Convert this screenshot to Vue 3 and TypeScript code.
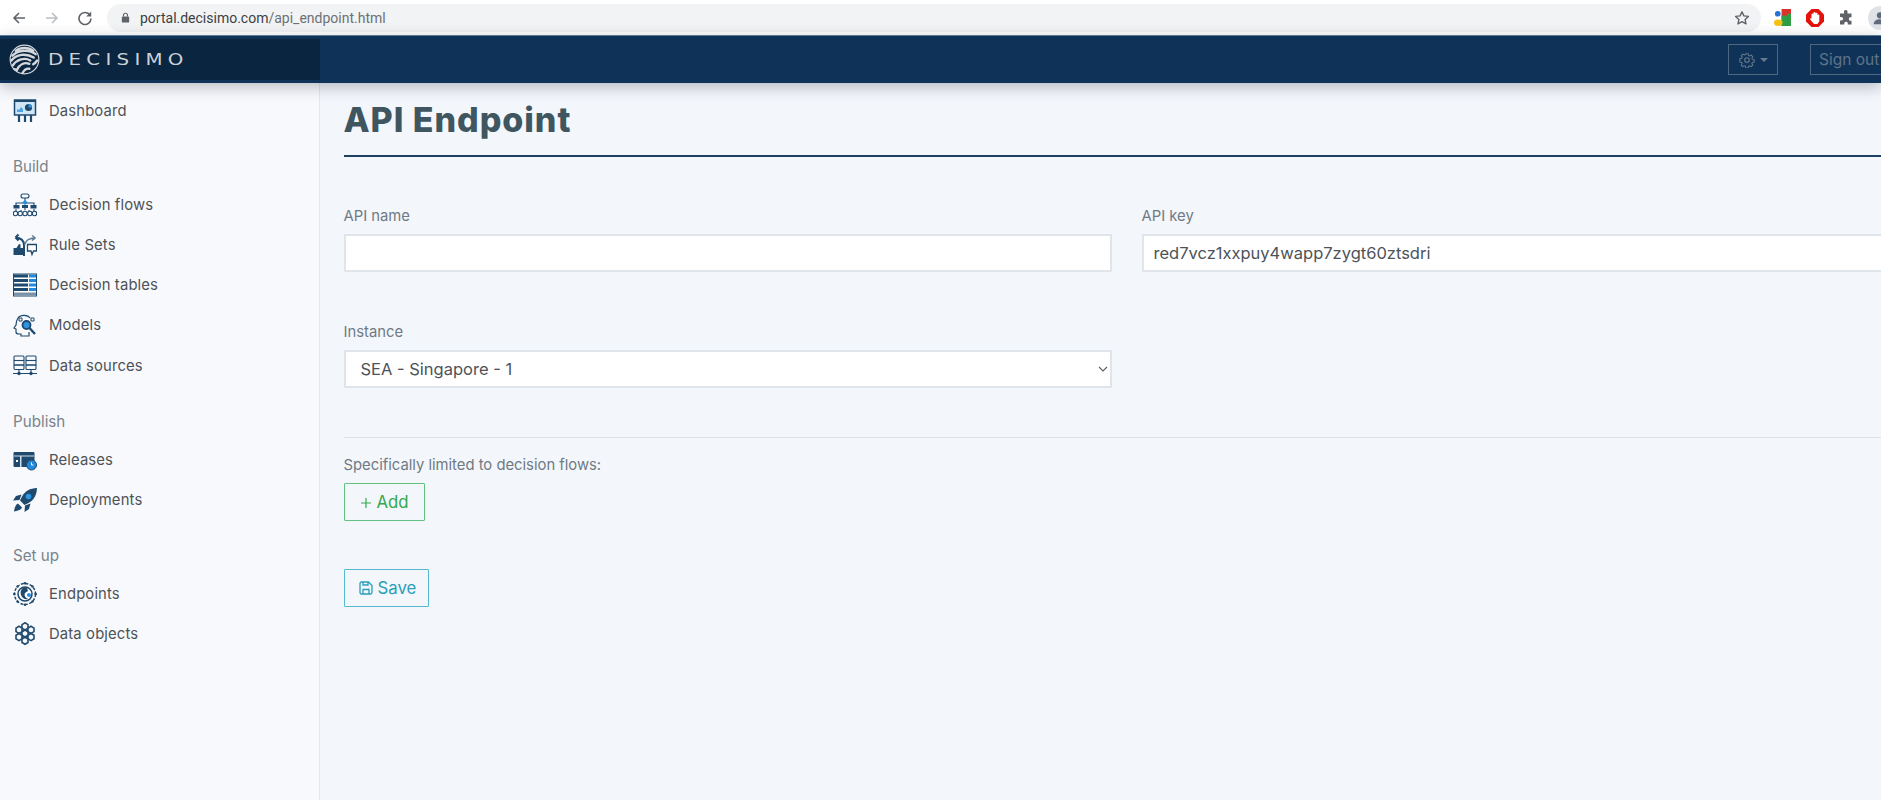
<script setup lang="ts">
const apiKey: string = 'red7vcz1xxpuy4wapp7zygt60ztsdri'
</script>

<template>
  <div class="page">
    <div class="chrome">
      <svg class="c-ico" viewBox="0 0 16 16"><path d="M14 8H3M8 3 3 8l5 5" fill="none" stroke="#5f6368" stroke-width="1.6"/></svg>
      <svg class="c-ico" viewBox="0 0 16 16"><path d="M2 8h11M8 3l5 5-5 5" fill="none" stroke="#bcc0c4" stroke-width="1.6"/></svg>
      <svg class="c-ico" viewBox="0 0 16 16"><path d="M13 5.2A6 6 0 1 0 14 8.6" fill="none" stroke="#5f6368" stroke-width="1.6"/><path d="M14.2 1.6v5h-5z" fill="#5f6368"/></svg>
      <div class="url">
        <svg class="lock" viewBox="0 0 12 12"><rect x="2" y="5" width="8" height="6.5" rx="1" fill="#5f6368"/><path d="M3.8 5V3.6a2.2 2.2 0 0 1 4.4 0V5" fill="none" stroke="#5f6368" stroke-width="1.2"/></svg>
        <span class="host">portal.decisimo.com</span><span class="path">/api_endpoint.html</span>
        <svg class="star" viewBox="0 0 16 16"><path d="m8 1.8 1.9 4.1 4.5.5-3.3 3 .9 4.5L8 11.7l-4 2.2.9-4.5-3.3-3 4.5-.5z" fill="none" stroke="#5f6368" stroke-width="1.4" stroke-linejoin="round"/></svg>
      </div>
      <svg class="ext ext-g" viewBox="0 0 18 18">
        <rect x="7" y="0" width="11" height="18" fill="#d8342c"/>
        <rect x="0" y="0" width="8" height="18" fill="#fff"/>
        <rect x="8" y="7" width="6" height="11" fill="#2f9e44"/>
        <rect x="14" y="5" width="4" height="13" fill="#2f9e44"/>
        <circle cx="4" cy="5" r="3" fill="#2a6fd6"/>
        <ellipse cx="4.5" cy="14.5" rx="4.5" ry="3.5" fill="#f5c211"/>
      </svg>
      <svg class="ext ext-r" viewBox="0 0 18 18">
        <path d="M5.5 0h7L18 5.5v7L12.5 18h-7L0 12.500v-7z" fill="#e3120b"/>
        <path d="M5.500 9V5.500a1 1 0 0 1 2 0V4a1 1 0 0 1 2 0v.8a1 1 0 0 1 2 0V6a1 1 0 0 1 1.800 0v6.200L11.500 15H8L4.200 10.500c-.5-.9.6-1.700 1.300-1.100z" fill="#fff"/>
      </svg>
      <svg class="ext ext-p" viewBox="0 0 16 16"><path d="M6 1.500a1.800 1.800 0 0 1 3.500 0V3.500h4v3.700h-1.300a1.800 1.800 0 0 0 0 3.500h1.300v3.800H9.800v-1.300a1.800 1.800 0 0 0-3.500 0v1.300H2v-4h1.300a1.800 1.800 0 0 0 0-3.600H2V3.500h4z" fill="#5f6368"/></svg>
      <div class="avatar">
        <svg viewBox="0 0 20 20"><circle cx="10" cy="7" r="3.500" fill="#5f6b7a"/><path d="M3 17c0-4 3.500-5.500 7-5.500s7 1.500 7 5.500z" fill="#5f6b7a"/></svg>
      </div>
    </div>

    <header class="topbar">
      <div class="brand">
        <svg class="globe" viewBox="0 0 32 32" fill="none" stroke="#d5d9dd" stroke-linecap="round">
          <circle cx="16" cy="16" r="14.800" stroke-width="1.200"/>
          <path d="M7 7c5-4 13-4 18 0M3.500 12c6-6 17-7 24-1.500M2.500 17c5-6.500 15-8 23-3M4 22c4-6 12-8.500 18-5M8 27c3-6 8-8.500 13-6.500M25 21c1.500-1 3-2.500 4-4M14 30c1.500-3 4-5 7-4.500" stroke-width="2.500"/>
          <circle cx="6" cy="26" r="1.300" fill="#d5d9dd" stroke="none"/>
        </svg>
        <span class="wordmark">DECISIMO</span>
      </div>
      <div class="top-actions">
        <button class="top-btn gear" type="button">
          <svg viewBox="0 0 16 16" class="gear-ico" fill="none" stroke="#68798a" stroke-width="1.100"><circle cx="8" cy="8" r="2.300"/><path d="M6.800 1.200h2.400l.4 1.900 1.300.6 1.700-1 1.600 1.700-1 1.600.6 1.300 1.900.4v2.400l-1.900.4-.6 1.300 1 1.700-1.700 1.600-1.600-1-1.300.6-.4 1.900H6.800l-.4-1.900-1.300-.6-1.700 1-1.600-1.700 1-1.600-.6-1.300-1.900-.4V6.600l1.900-.4.600-1.300-1-1.700 1.700-1.600 1.600 1 1.300-.6z" transform="translate(.6 .6) scale(.93)"/></svg>
          <span class="caret"></span>
        </button>
        <button class="top-btn signout" type="button">Sign out</button>
      </div>
    </header>

    <div class="body">
      <aside class="sidebar">
        <nav class="nav">
          <a class="item">
            <svg class="ico" viewBox="0 0 24 24"><rect x="1.500" y="1" width="21" height="15" fill="#cfe6f7" stroke="#1f4a6e" stroke-width="1.500"/><rect x="1" y="1" width="22" height="2" fill="#1f4a6e"/><path d="M4 13v-3l2 1 2-3 2 2v3z" fill="#49a5e6"/><circle cx="15.500" cy="8.500" r="3.600" fill="#1f4a6e"/><path d="M15.500 8.500V4.900a3.600 3.600 0 0 1 3.600 3.600z" fill="#2f94e0"/><path d="M6 16v7M12 16v7M18 16v7" stroke="#1f4a6e" stroke-width="2.200"/></svg>
            Dashboard
          </a>

          <div class="group">Build</div>
          <a class="item">
            <svg class="ico" viewBox="0 0 24 24" fill="none" stroke="#1f4a6e" stroke-width="1.100"><rect x="8" y="1" width="8" height="4" rx="2"/><path d="M12 5v4M3 12V10h18v2M12 14v3M3 16v2M21 16v2M8 17v1M16 17v1"/><path d="m12 7 3 2.500-3 2.500-3-2.500z" fill="#2a8fdc" stroke="none"/><rect x="0.500" y="12" width="6" height="3.500" fill="#1f4a6e" stroke="none"/><rect x="17.500" y="12" width="6" height="3.500" fill="#1f4a6e" stroke="none"/><rect x="9" y="12" width="6" height="3" fill="#1f4a6e" stroke="none"/><circle cx="2.500" cy="20.500" r="2.200"/><circle cx="7.200" cy="20.500" r="2.200"/><circle cx="12" cy="20.500" r="2.200"/><circle cx="16.800" cy="20.500" r="2.200"/><circle cx="21.500" cy="20.500" r="2.200"/></svg>
            Decision flows
          </a>
          <a class="item">
            <svg class="ico" viewBox="0 0 24 24" fill="none" stroke="#1f4a6e" stroke-width="2"><path d="M11 23V12C11 7 8 5 2.500 4.500M2.500 4.500l3-3M2.500 4.500l3 3"/><path d="M11.500 12c1-5 5-7 11-7M22.500 5 19 2.500M22.500 5 19 7.500" stroke="#5a7a94" stroke-width="1.300"/><path d="M0.500 15h3l2.500-4 1.500.5V15h2.500v7H0.500z" fill="#1f4a6e" stroke="none"/><path d="M14.500 11.500h9v6.500h-3l-1.500 3.500-1-3.500h-3.500z" fill="#fff" stroke-width="1.300"/></svg>
            Rule Sets
          </a>
          <a class="item">
            <svg class="ico" viewBox="0 0 24 24"><rect x="0.500" y="1" width="23" height="22" fill="#fff" stroke="#1f4a6e"/><g fill="#1f4a6e"><rect x="1" y="1.500" width="14" height="3"/><rect x="1" y="6" width="14" height="3"/><rect x="1" y="10.500" width="14" height="3"/><rect x="1" y="15" width="14" height="3"/></g><g fill="#1f8ae0"><rect x="16" y="1.500" width="7" height="3"/><rect x="16" y="6" width="7" height="3"/><rect x="16" y="10.500" width="7" height="3"/><rect x="16" y="15" width="7" height="3"/></g><rect x="1" y="19.500" width="22" height="3" fill="#7a92a8"/></svg>
            Decision tables
          </a>
          <a class="item">
            <svg class="ico" viewBox="0 0 24 24" fill="none" stroke="#1f4a6e" stroke-width="1.200"><path d="M17 5c-2-3-9-4-12 0-2 3-2 5-2 7l-2 3 2 1v3c0 1 1 2 3 2h2v2h8v-4"/><circle cx="13.500" cy="12" r="4" fill="#2f94e0" stroke-width="1.800"/><path d="m16.500 15 5.500 6" stroke-width="2.400"/><path d="M6 5h3v3H6zM18 5h3v3h-3z" stroke-width="1"/></svg>
            Models
          </a>
          <a class="item">
            <svg class="ico" viewBox="0 0 24 24" fill="none" stroke="#1f4a6e" stroke-width="1.100"><rect x="1" y="2" width="10" height="4.500" rx="1"/><rect x="1" y="6.500" width="10" height="4.500"/><rect x="1" y="11" width="10" height="4.500" rx="1"/><rect x="13" y="2" width="10" height="4.500" rx="1"/><rect x="13" y="6.500" width="10" height="4.500"/><rect x="13" y="11" width="10" height="4.500" rx="1"/><path d="M6 15.500V19M18 15.500V19M0 19.500h24" /><circle cx="6" cy="19.500" r="1.200" fill="#1f4a6e"/><circle cx="18" cy="19.500" r="1.200" fill="#1f4a6e"/></svg>
            Data sources
          </a>

          <div class="group">Publish</div>
          <a class="item">
            <svg class="ico" viewBox="0 0 24 24"><rect x="0.500" y="4" width="21" height="15" rx="1" fill="#1f4a6e"/><path d="M1 8h20" stroke="#cfe0ee" stroke-width="1"/><rect x="7" y="8" width="1.500" height="11" fill="#cfe0ee"/><rect x="3" y="12" width="2" height="2" fill="#fff"/><circle cx="18.500" cy="17" r="5" fill="#2188dc" stroke="#1f4a6e" stroke-width="1"/><path d="M18.500 14.500V17h2" stroke="#fff" fill="none"/></svg>
            Releases
          </a>
          <a class="item">
            <svg class="ico" viewBox="0 0 24 24"><path d="M24 0c-7 .3-12 3-15 8.500l-2 4 4.500 4.500 4-2c5.500-3 8.200-8 8.500-15z" fill="#1f4a6e"/><circle cx="15.500" cy="8.500" r="2.800" fill="#2a96e6"/><path d="M8.500 6.500 3 8 0 12.500l6.500-.5zM17.500 15.500 16 21l-4.500 3 .5-6.500z" fill="#1f4a6e"/><path d="M5 15.500c-2.500 1-3.500 4.500-4 8 3.500-.5 7-1.500 8-4z" fill="#1f4a6e"/></svg>
            Deployments
          </a>

          <div class="group">Set up</div>
          <a class="item">
            <svg class="ico" viewBox="0 0 24 24" fill="none" stroke="#1f4a6e"><circle cx="12" cy="12" r="10.500" stroke-width="1.400" stroke-dasharray="3 1.500"/><circle cx="12" cy="12" r="7" fill="#fff" stroke-width="1.500"/><path d="M12 5c-4 1-5 5-4 8s4 5 7 4c-3-2-4-3-3-6l3-2-1-3z" fill="#1f4a6e" stroke="none"/><circle cx="16" cy="13" r="2" fill="#2a8fdc" stroke="none"/><g fill="#1f4a6e" stroke="none"><circle cx="12" cy="1.300" r="1.300"/><circle cx="12" cy="22.700" r="1.300"/><circle cx="1.300" cy="12" r="1.300"/><circle cx="22.700" cy="12" r="1.300"/><circle cx="4.500" cy="4.500" r="1.200"/><circle cx="19.500" cy="4.500" r="1.200"/><circle cx="4.500" cy="19.500" r="1.200"/><circle cx="19.500" cy="19.500" r="1.200"/></g></svg>
            Endpoints
          </a>
          <a class="item">
            <svg class="ico" viewBox="0 0 24 24" fill="none" stroke="#1f4a6e" stroke-width="1.600"><path d="m12 .8 3 1.800v3.500l-3 1.800-3-1.800V2.600zM6 4.300l3 1.800v3.500l-3 1.800-3-1.800V6.100zM18 4.300l3 1.800v3.500l-3 1.800-3-1.800V6.100zM12 8l3 1.800v3.500L12 15l-3-1.700V9.800zM6 11.500l3 1.800v3.500l-3 1.800-3-1.800v-3.500zM18 11.500l3 1.800v3.500l-3 1.800-3-1.800v-3.500zM12 15.200l3 1.800v3.500l-3 1.800-3-1.800V17z"/></svg>
            Data objects
          </a>
        </nav>
      </aside>

      <main class="main">
        <h1 class="title">API Endpoint</h1>
        <form class="form" @submit.prevent>
          <div class="grid">
            <div class="field">
              <label class="label">API name</label>
              <input class="control" type="text" />
            </div>
            <div class="field">
              <label class="label">API key</label>
              <input class="control key" type="text" :value="apiKey" />
            </div>
            <div class="field">
              <label class="label">Instance</label>
              <div class="select-wrap">
                <select class="control select">
                  <option>SEA - Singapore - 1</option>
                </select>
                <svg class="chev" viewBox="0 0 10 6"><path d="m1 1 4 4 4-4" fill="none" stroke="#55616c" stroke-width="1.100"/></svg>
              </div>
            </div>
          </div>
          <hr class="rule" />
          <div class="limited">Specifically limited to decision flows:</div>
          <button class="btn add" type="button">
            <svg viewBox="0 0 12 12" class="plus"><path d="M6 1v10M1 6h10" stroke="#36a84f" stroke-width="1.200"/></svg>
            Add
          </button>
          <div>
            <button class="btn save" type="submit">
              <svg viewBox="0 0 14 14" class="floppy" fill="none" stroke="#2a9fb8" stroke-width="1.300"><path d="M1 2.500A1.500 1.500 0 0 1 2.500 1h7L13 4.500v7a1.500 1.500 0 0 1-1.500 1.500h-9A1.500 1.500 0 0 1 1 11.500z"/><path d="M4 13V8.500h6V13M4 1v3h5V1"/></svg>
              Save
            </button>
          </div>
        </form>
      </main>
    </div>
  </div>
</template>

<style>
html, body { margin: 0; overflow: hidden; }
</style>

<style scoped>
.page {
  width: 1881px;
  height: 800px;
  overflow: hidden;
  display: flex;
  flex-direction: column;
  font-family: Inter, "Liberation Sans", sans-serif;
  background: #f3f6fb;
}
.chrome {
  height: 35px;
  flex: none;
  background: #fff;
  display: flex;
  align-items: center;
  padding-left: 11px;
  box-sizing: border-box;
}
.c-ico { width: 16px; height: 16px; margin-right: 17px; flex: none; }
.url {
  width: 1654px;
  margin-left: -3px;
  height: 28px;
  border-radius: 14px;
  background: #f1f3f4;
  display: flex;
  align-items: center;
  padding-left: 13px;
  box-sizing: border-box;
  font-family: Roboto, "Liberation Sans", sans-serif;
  font-size: 14px;
  flex: none;
}
.lock { width: 11px; height: 11px; margin-right: 9px; flex: none; }
.host { color: #3c4043; }
.path { color: #6d7175; }
.star { width: 16px; height: 16px; margin-left: auto; margin-right: 11px; }
.ext { flex: none; }
.ext-g { width: 17px; height: 17px; margin-left: 13px; }
.ext-r { width: 18px; height: 18px; margin-left: 15px; }
.ext-p { width: 16px; height: 16px; margin-left: 14px; }
.avatar {
  width: 24px;
  height: 24px;
  border-radius: 50%;
  background: #dfe3e8;
  margin-left: 14px;
  flex: none;
  display: flex;
  align-items: center;
  justify-content: center;
}
.avatar svg { width: 18px; height: 18px; }

.topbar {
  height: 48px;
  flex: none;
  background: #0f3358;
  border-top: 1px solid #5d7a94;
  box-sizing: border-box;
  display: flex;
  box-shadow: 0 4px 14px rgba(20, 30, 45, 0.28);
  position: relative;
  z-index: 2;
}
.brand {
  width: 320px;
  height: 41px;
  margin-top: 3px;
  background: #0a2540;
  display: flex;
  align-items: center;
  padding-left: 9px;
  box-sizing: border-box;
  flex: none;
}
.globe { width: 31px; height: 31px; flex: none; }
.wordmark {
  margin-left: 8px;
  color: #ccd2d8;
  font-family: "DejaVu Sans", sans-serif;
  font-size: 16.500px;
  font-weight: 400;
  letter-spacing: 4.400px;
  transform: scaleX(1.2);
  transform-origin: left center;
}
.top-actions {
  margin-left: auto;
  display: flex;
  align-items: center;
  gap: 32px;
  margin-right: -40px;
}
.top-btn {
  height: 31px;
  background: transparent;
  border: 1px solid #4d6880;
  color: #5f7387;
  font-family: inherit;
  font-size: 15.500px;
  padding: 0;
  box-sizing: border-box;
  display: flex;
  align-items: center;
  justify-content: center;
}
.gear { width: 50px; gap: 5px; }
.gear-ico { width: 16px; height: 16px; }
.caret {
  width: 0;
  height: 0;
  border-left: 4px solid transparent;
  border-right: 4px solid transparent;
  border-top: 4px solid #68798a;
}
.signout { width: 111px; justify-content: flex-start; padding-left: 8px; }

.body { flex: 1; display: flex; min-height: 0; }
.sidebar {
  width: 320px;
  flex: none;
  box-sizing: border-box;
  background: #f8f9fc;
  border-right: 1px solid #e4e7ed;
}
.nav { padding-top: 7.600px; display: flex; flex-direction: column; }
.item {
  height: 40.300px;
  display: flex;
  align-items: center;
  padding-left: 13px;
  gap: 12px;
  color: #4d5257;
  font-size: 14.800px;
  font-weight: 400;
  letter-spacing: 0.150px;
}
.ico { width: 24px; height: 24px; flex: none; }
.group {
  height: 35.500px;
  margin-top: 18px;
  padding-left: 13px;
  display: flex;
  align-items: center;
  color: #7a838c;
  font-size: 15.200px;
  font-weight: 400;
}

.main { flex: 1; min-width: 0; padding-left: 23.500px; }
.title {
  margin: 0;
  width: 1600px;
  height: 74px;
  box-sizing: border-box;
  border-bottom: 2px solid #1f3f63;
  padding-top: 17px;
  color: #3f5560;
  font-size: 34px;
  line-height: 40px;
  font-weight: 800;
  letter-spacing: 0.950px;
}
.form { width: 1600px; }
.grid {
  display: grid;
  grid-template-columns: 768px 768px;
  column-gap: 30px;
  row-gap: 49px;
  padding-top: 48px;
}
.field { display: flex; flex-direction: column; }
.label {
  height: 29px;
  padding-top: 1px;
  box-sizing: border-box;
  color: #6f7a84;
  font-size: 14.800px;
  font-weight: 400;
  line-height: 20px;
}
.control {
  width: 100%;
  height: 38px;
  box-sizing: border-box;
  background: #fff;
  border: 2px solid #e0e5eb;
  border-radius: 0;
  outline: none;
  padding: 0 10px;
  font-family: inherit;
  font-size: 16.500px;
  font-weight: 400;
  color: #4d5359;
}
.select-wrap { position: relative; }
.select { appearance: none; padding-left: 15px; }
.chev { position: absolute; right: 4px; top: 16px; width: 10px; height: 6px; }
.rule {
  margin: 49px 0 0;
  border: 0;
  border-top: 1px solid #dfe3e8;
}
.limited {
  margin-top: 17px;
  height: 28px;
  color: #6f7a84;
  font-size: 14.800px;
  font-weight: 400;
  line-height: 20px;
}
.btn {
  height: 38px;
  box-sizing: border-box;
  background: transparent;
  border-radius: 1px;
  font-family: inherit;
  font-size: 16.800px;
  font-weight: 400;
  display: inline-flex;
  align-items: center;
  padding: 0;
}
.add {
  width: 81px;
  border: 1.500px solid #63c07f;
  color: #36a84f;
  padding-left: 15px;
  gap: 5px;
}
.plus { width: 12px; height: 12px; margin-top: 2px; }
.save {
  width: 85px;
  margin-top: 48px;
  border: 1.500px solid #55bad0;
  color: #2a9fb8;
  padding-left: 14px;
  gap: 5px;
}
.floppy { width: 14px; height: 14px; }
</style>
